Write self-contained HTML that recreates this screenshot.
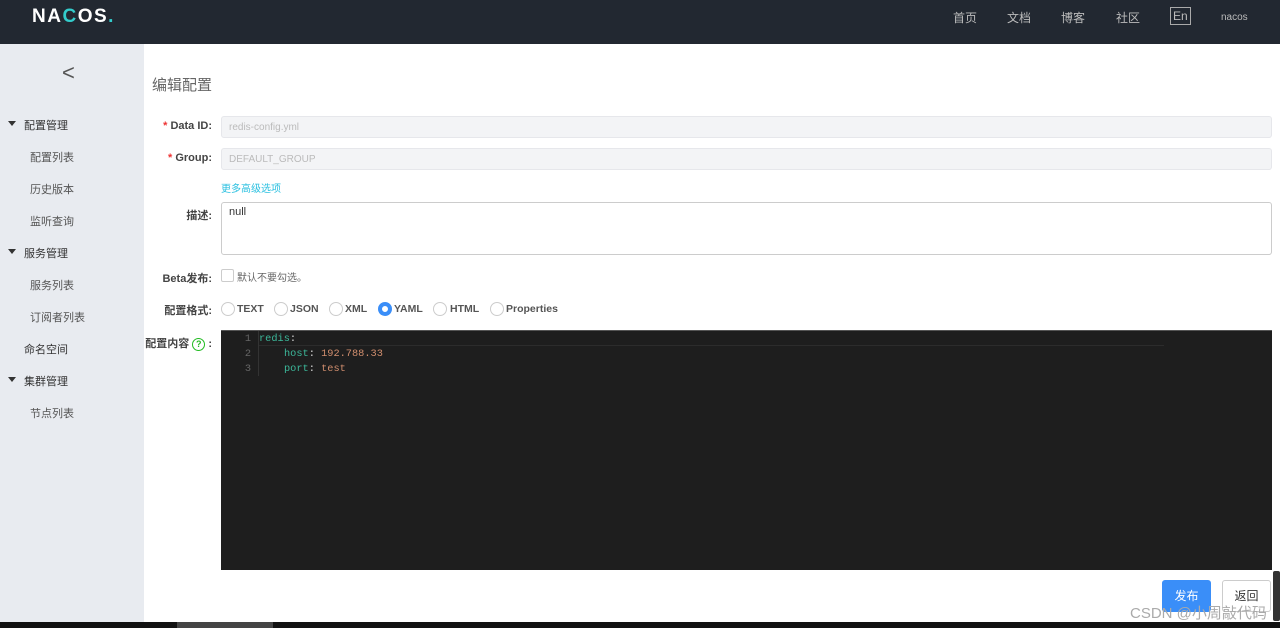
<!DOCTYPE html>
<html><head><meta charset="utf-8"><style>
*{margin:0;padding:0;box-sizing:border-box}
body{width:1280px;height:628px;overflow:hidden;background:#fff;font-family:"Liberation Sans","Noto Sans CJK SC",sans-serif;position:relative;font-size:12px;color:#333}
.hd{position:absolute;left:0;top:0;width:1280px;height:44px;background:#222831}
.logo{position:absolute;left:32px;top:6px;color:#fff;font-weight:bold;font-size:19px;letter-spacing:1.5px}
.nav{position:absolute;top:9px;color:#bbb;font-size:12px}
.side{position:absolute;left:0;top:44px;width:144px;height:578px;background:#e8ebf0}
.side div{position:absolute;font-size:11px;color:#333}
.side .sub{left:30px;color:#555}
.tri{position:absolute;left:8px;width:0;height:0;border-left:4px solid transparent;border-right:4px solid transparent;border-top:5px solid #333}
.lbl{position:absolute;font-size:11px;color:#444;font-weight:bold;text-align:right;width:70px;left:142px}
.star{color:#e33}
.inp{position:absolute;left:221px;width:1051px;height:22px;background:#f3f4f6;border:1px solid #e6e7eb;border-radius:3px;font-size:10px;color:#bbb;padding:5px 7px}
.rad{position:absolute;top:302px;width:14px;height:14px;border:1px solid #ccc;border-radius:50%;background:#fff}
.rt{position:absolute;top:303px;font-size:10.5px;font-weight:bold;color:#555}
.ed{position:absolute;left:221px;top:330px;width:1051px;height:240px;background:#1e1e1e;border-top:1px solid #555;font-family:"Liberation Mono",monospace;font-size:10.3px}
.ln{position:absolute;left:0;width:30px;text-align:right;color:#666}
.bot{position:absolute;left:0;top:622px;width:1280px;height:6px;background:#111}
</style></head><body>
<div class="hd">
<div class="logo">NA<span style="color:#3cc">C</span>OS<span style="color:#3cc">.</span></div>
<div class="nav" style="left:953px">首页</div>
<div class="nav" style="left:1007px">文档</div>
<div class="nav" style="left:1061px">博客</div>
<div class="nav" style="left:1116px">社区</div>
<div class="nav" style="left:1170px;top:7px;border:1px solid #aaa;padding:1px 2px;font-size:12px">En</div>
<div class="nav" style="left:1221px;font-size:10px;top:12px">nacos</div>
</div>
<div class="side">
<div style="left:62px;top:16px;font-size:22px;color:#555;font-weight:300">&lt;</div>
<span class="tri" style="top:77px"></span><div style="left:24px;top:73px">配置管理</div>
<div class="sub" style="top:105px">配置列表</div>
<div class="sub" style="top:137px">历史版本</div>
<div class="sub" style="top:169px">监听查询</div>
<span class="tri" style="top:205px"></span><div style="left:24px;top:201px">服务管理</div>
<div class="sub" style="top:233px">服务列表</div>
<div class="sub" style="top:265px">订阅者列表</div>
<div style="left:24px;top:297px">命名空间</div>
<span class="tri" style="top:333px"></span><div style="left:24px;top:329px">集群管理</div>
<div class="sub" style="top:361px">节点列表</div>
</div>
<div style="position:absolute;left:152px;top:74px;font-size:15px;color:#666">编辑配置</div>
<div class="lbl" style="top:120px"><span class="star">* </span>Data ID:</div>
<div class="inp" style="top:116px">redis-config.yml</div>
<div class="lbl" style="top:152px"><span class="star">* </span>Group:</div>
<div class="inp" style="top:148px">DEFAULT_GROUP</div>
<div style="position:absolute;left:221px;top:180px;font-size:10px;color:#2bc0e0">更多高级选项</div>
<div class="lbl" style="top:207px">描述:</div>
<div style="position:absolute;left:221px;top:202px;width:1051px;height:53px;border:1px solid #ccc;border-radius:3px;padding:3px 7px;font-size:11px">null</div>
<div class="lbl" style="top:270px">Beta发布:</div>
<div style="position:absolute;left:221px;top:269px;width:13px;height:13px;border:1px solid #ccc;border-radius:2px"></div>
<div style="position:absolute;left:237px;top:269px;font-size:10px;color:#666">默认不要勾选。</div>
<div class="lbl" style="top:302px">配置格式:</div>
<div class="rad" style="left:221px"></div><div class="rt" style="left:237px">TEXT</div>
<div class="rad" style="left:274px"></div><div class="rt" style="left:290px">JSON</div>
<div class="rad" style="left:329px"></div><div class="rt" style="left:345px">XML</div>
<div class="rad" style="left:378px;border:4px solid #3a8ef8"></div><div class="rt" style="left:394px">YAML</div>
<div class="rad" style="left:433px"></div><div class="rt" style="left:450px">HTML</div>
<div class="rad" style="left:490px"></div><div class="rt" style="left:506px">Properties</div>
<div class="lbl" style="top:335px;left:132px;width:80px">配置内容 <span style="display:inline-block;width:13px;height:13px;border:1.5px solid #2b2;border-radius:50%;color:#2b2;font-size:9px;text-align:center;line-height:10px">?</span> :</div>
<div class="ed">
<div style="position:absolute;left:37px;top:0;width:1px;height:45px;background:#333"></div>
<div style="position:absolute;left:38px;top:14px;width:905px;height:1px;background:#2c2c2c"></div>
<div class="ln" style="top:2px">1</div><div class="ln" style="top:17px">2</div><div class="ln" style="top:32px">3</div>
<div style="position:absolute;left:38px;top:2px;color:#3cb89a">redis<span style="color:#ddd">:</span></div>
<div style="position:absolute;left:63px;top:17px;color:#3cb89a">host<span style="color:#ddd">:</span> <span style="color:#d18e6e">192.788.33</span></div>
<div style="position:absolute;left:63px;top:32px;color:#3cb89a">port<span style="color:#ddd">:</span> <span style="color:#d18e6e">test</span></div>
</div>
<div style="position:absolute;left:1162px;top:580px;width:49px;height:32px;background:#3a8ef8;border-radius:3px;color:#fff;font-size:12px;text-align:center;line-height:32px">发布</div>
<div style="position:absolute;left:1222px;top:580px;width:49px;height:32px;border:1px solid #ccc;border-radius:3px;color:#333;font-size:12px;text-align:center;line-height:30px">返回</div>
<div style="position:absolute;left:1130px;top:602px;font-size:15px;color:#aaa">CSDN @小周敲代码</div>
<div style="position:absolute;left:1273px;top:571px;width:7px;height:50px;background:#333;border-radius:2px"></div>
<div class="bot"><div style="position:absolute;left:177px;top:0;width:96px;height:6px;background:#444"></div></div>
</body></html>
